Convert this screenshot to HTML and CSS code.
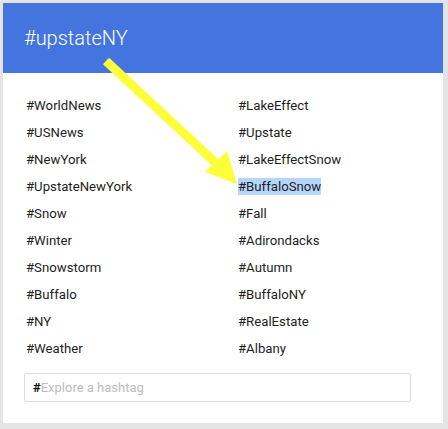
FILE: index.html
```html
<!DOCTYPE html>
<html>
<head>
<meta charset="utf-8">
<link rel="stylesheet" href="styles.css">
</head>
<body>
<div class="card">
  <div class="header"><span class="title">#upstateNY</span></div>
  <div class="body">
    <div class="tags">
      <span class="tag">#WorldNews</span><span class="tag">#LakeEffect</span>
      <span class="tag">#USNews</span><span class="tag">#Upstate</span>
      <span class="tag">#NewYork</span><span class="tag">#LakeEffectSnow</span>
      <span class="tag">#UpstateNewYork</span><span class="tag"><span class="sel">#BuffaloSnow</span></span>
      <span class="tag">#Snow</span><span class="tag">#Fall</span>
      <span class="tag">#Winter</span><span class="tag">#Adirondacks</span>
      <span class="tag">#Snowstorm</span><span class="tag">#Autumn</span>
      <span class="tag">#Buffalo</span><span class="tag">#BuffaloNY</span>
      <span class="tag">#NY</span><span class="tag">#RealEstate</span>
      <span class="tag">#Weather</span><span class="tag">#Albany</span>
    </div>
    <div class="search"><span class="hash">#</span><span class="ph">Explore a hashtag</span></div>
  </div>
</div>
<svg class="arrow" width="448" height="429" viewBox="0 0 448 429">
  <line x1="106" y1="61" x2="219" y2="166" stroke="#fdfd3a" stroke-width="9" stroke-linecap="butt"/>
  <polygon points="237,184 205,172 227,151" fill="#fdfd3a"/>
</svg>
</body>
</html>
```
FILE: styles.css
```css
html, body {
  margin: 0;
  padding: 0;
}
body {
  background: #e4e4e4;
  width: 448px;
  height: 429px;
  padding: 3px 5px 6px 3px;
  box-sizing: border-box;
  position: relative;
  font-family: Roboto, "Liberation Sans", sans-serif;
}
.card {
  background: #fff;
  width: 440px;
  height: 420px;
  display: flex;
  flex-direction: column;
}
.header {
  background: #4475df;
  height: 70px;
  box-sizing: border-box;
  padding: 23px 0 0 21px;
}
.title {
  color: #fff;
  font-size: 20px;
  font-weight: 300;
  line-height: 24px;
  display: block;
}
.body {
  padding: 19px 32px 0 21px;
}
.tags {
  display: grid;
  grid-template-columns: 212px 1fr;
  padding-left: 2px;
}
.tag {
  font-size: 13.2px;
  line-height: 27px;
  height: 27px;
  color: #1e1e1e;
}
.sel {
  background: #b5d5fb;
  padding: 1px 0;
}
.search {
  margin-top: 11px;
  height: 29px;
  width: 387px;
  box-sizing: border-box;
  border: 1px solid #dcdcdc;
  border-radius: 2px;
  padding-left: 8px;
  display: flex;
  align-items: center;
  font-size: 13px;
}
.hash {
  color: #111;
  font-weight: bold;
}
.ph {
  color: #bdbdbd;
}
.arrow {
  position: absolute;
  left: 0;
  top: 0;
}
```
